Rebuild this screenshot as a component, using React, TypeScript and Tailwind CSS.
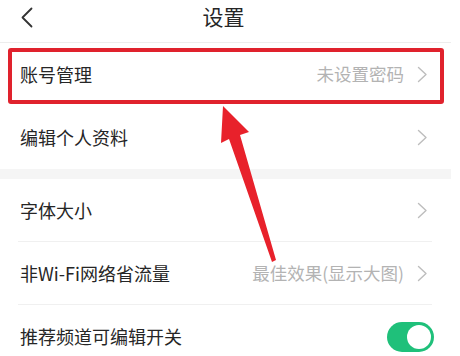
import React from "react";

function Chevron() {
  return (
    <svg width="11" height="17" viewBox="0 0 11 17" className="shrink-0">
      <path d="M1.5 1.5 L9 8.5 L1.5 15.5" fill="none" stroke="#bdbdbd" strokeWidth="1.4" strokeLinecap="round" strokeLinejoin="round" />
    </svg>
  );
}

function Row({ label, value, toggle, sep = true }: { label: string; value?: string; toggle?: boolean; sep?: boolean }) {
  return (
    <div className="relative flex h-[63px] items-center pl-[20px] pr-[23px]">
      <span className="flex-1 text-[18px] text-[#262626]">{label}</span>
      {value && <span className="mr-[13px] text-[17.5px] text-[#b3b3b3]">{value}</span>}
      {toggle ? (
        <div className="mr-[-6px] flex h-[30px] w-[47px] items-center justify-end rounded-full bg-[#1fc07a] px-[3px]">
          <div className="h-[24px] w-[24px] rounded-full bg-white" />
        </div>
      ) : (
        <Chevron />
      )}
      {sep && <div className="absolute bottom-0 left-[18px] right-[19px] h-px bg-[#f0f0f0]" />}
    </div>
  );
}

export default function App() {
  return (
    <div
      className="relative h-[356px] w-[460px] overflow-hidden bg-white"
      style={{ fontFamily: '"Noto Sans CJK SC", "Noto Sans", sans-serif' }}
    >
      <div className="w-[451px]">
        <div className="relative flex h-[43px] items-center justify-center border-b border-[#ededed] pb-[8px]">
          <svg width="14" height="22" viewBox="0 0 14 22" className="absolute left-[20px] top-[7px]">
            <path d="M11.5 1.5 L2.5 10.5 L11.5 19.5" fill="none" stroke="#333333" strokeWidth="1.8" strokeLinecap="round" strokeLinejoin="round" />
          </svg>
          <span className="ml-[-4px] text-[21px] text-[#262626]">设置</span>
        </div>
        <Row label="账号管理" value="未设置密码" sep={false} />
        <Row label="编辑个人资料" sep={false} />
        <div className="h-[10px] bg-[#f5f5f5]" />
        <Row label="字体大小" />
        <Row label="非Wi-Fi网络省流量" value="最佳效果(显示大图)" />
        <Row label="推荐频道可编辑开关" toggle sep={false} />
      </div>

      <div className="absolute left-[8px] top-[48px] h-[56px] w-[436px] rounded-[3px] border-[4px] border-[#e0222d]" />

      <svg className="absolute left-0 top-0" width="460" height="356" viewBox="0 0 460 356">
        <polygon
          points="223,106 249,132 240,135 276,260 272,262 229,139 221,143"
          fill="#e8212b"
        />
      </svg>
    </div>
  );
}
